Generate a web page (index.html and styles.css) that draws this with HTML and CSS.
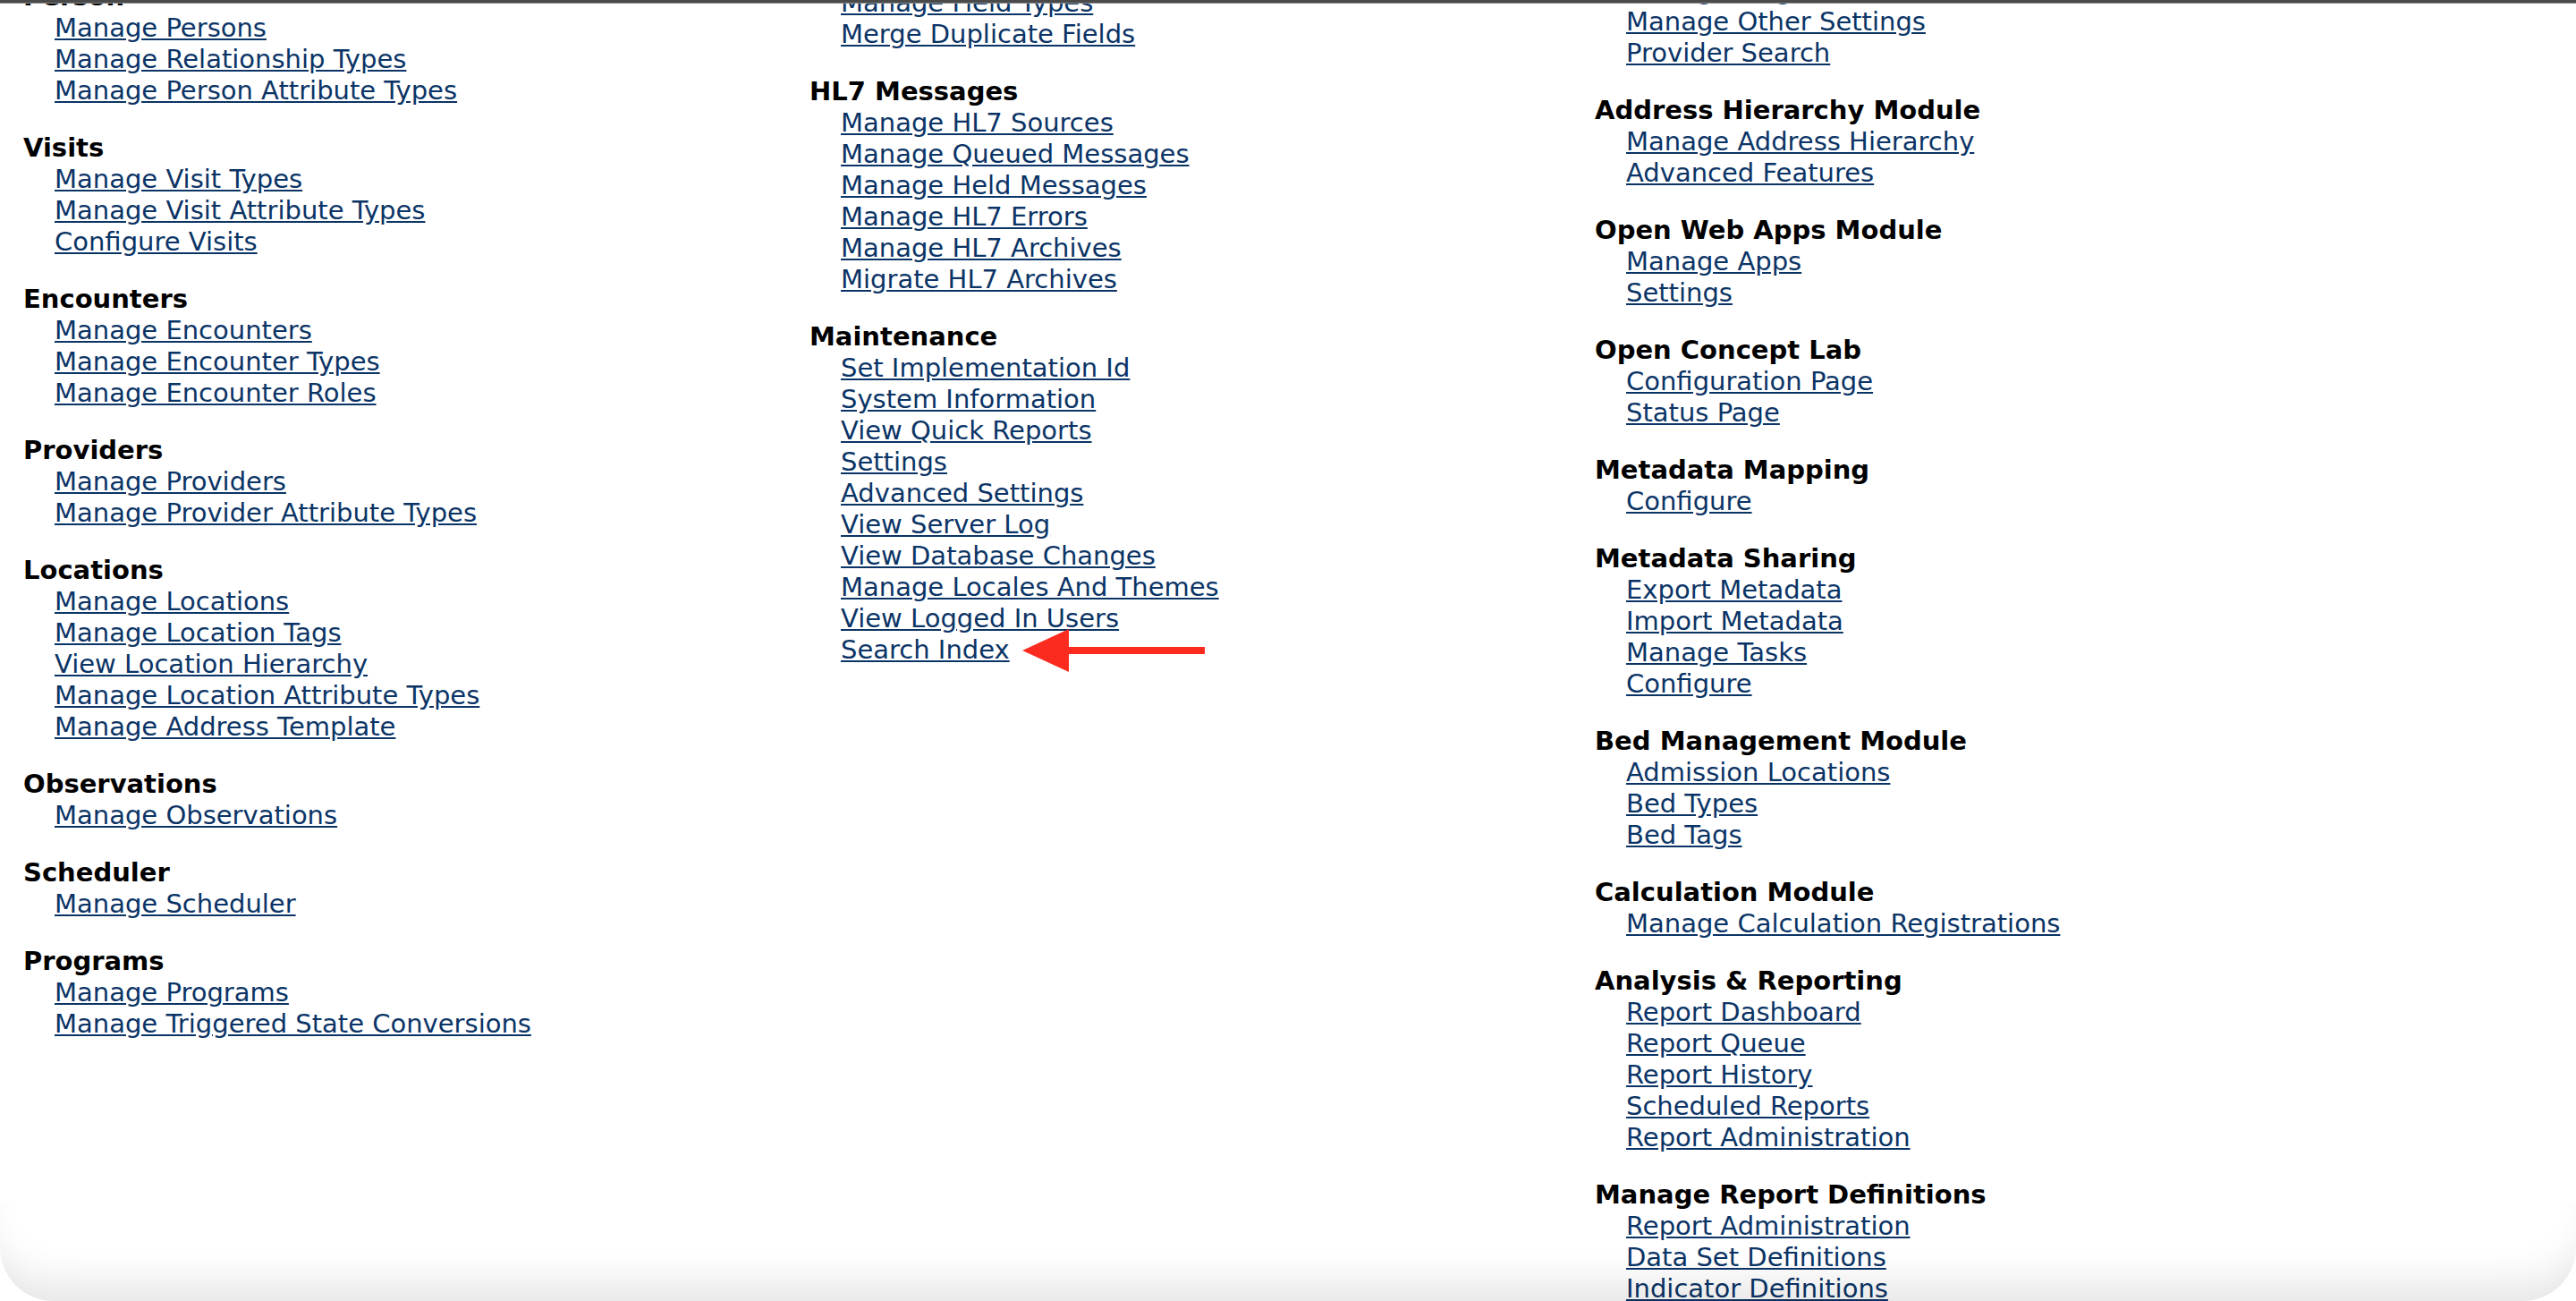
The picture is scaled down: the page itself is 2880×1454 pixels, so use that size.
FILE: index.html
```html
<!DOCTYPE html>
<html>
<head>
<meta charset="utf-8">
<title>Administration</title>
<link rel="stylesheet" href="styles.css">
</head>
<body>
<div class="topbar"></div>
<div class="page">
  <div class="col col-a">
    <div class="section">
      <h3 class="title">Person</h3>
      <ul class="links">
        <li><a href="#">Manage Persons</a></li>
        <li><a href="#">Manage Relationship Types</a></li>
        <li><a href="#">Manage Person Attribute Types</a></li>
      </ul>
    </div>
    <div class="section">
      <h3 class="title">Visits</h3>
      <ul class="links">
        <li><a href="#">Manage Visit Types</a></li>
        <li><a href="#">Manage Visit Attribute Types</a></li>
        <li><a href="#">Configure Visits</a></li>
      </ul>
    </div>
    <div class="section">
      <h3 class="title">Encounters</h3>
      <ul class="links">
        <li><a href="#">Manage Encounters</a></li>
        <li><a href="#">Manage Encounter Types</a></li>
        <li><a href="#">Manage Encounter Roles</a></li>
      </ul>
    </div>
    <div class="section">
      <h3 class="title">Providers</h3>
      <ul class="links">
        <li><a href="#">Manage Providers</a></li>
        <li><a href="#">Manage Provider Attribute Types</a></li>
      </ul>
    </div>
    <div class="section">
      <h3 class="title">Locations</h3>
      <ul class="links">
        <li><a href="#">Manage Locations</a></li>
        <li><a href="#">Manage Location Tags</a></li>
        <li><a href="#">View Location Hierarchy</a></li>
        <li><a href="#">Manage Location Attribute Types</a></li>
        <li><a href="#">Manage Address Template</a></li>
      </ul>
    </div>
    <div class="section">
      <h3 class="title">Observations</h3>
      <ul class="links">
        <li><a href="#">Manage Observations</a></li>
      </ul>
    </div>
    <div class="section">
      <h3 class="title">Scheduler</h3>
      <ul class="links">
        <li><a href="#">Manage Scheduler</a></li>
      </ul>
    </div>
    <div class="section">
      <h3 class="title">Programs</h3>
      <ul class="links">
        <li><a href="#">Manage Programs</a></li>
        <li><a href="#">Manage Triggered State Conversions</a></li>
      </ul>
    </div>
  </div>

  <div class="col col-b">
    <div class="section">
      <ul class="links">
        <li><a href="#">Manage Field Types</a></li>
        <li><a href="#">Merge Duplicate Fields</a></li>
      </ul>
    </div>
    <div class="section">
      <h3 class="title">HL7 Messages</h3>
      <ul class="links">
        <li><a href="#">Manage HL7 Sources</a></li>
        <li><a href="#">Manage Queued Messages</a></li>
        <li><a href="#">Manage Held Messages</a></li>
        <li><a href="#">Manage HL7 Errors</a></li>
        <li><a href="#">Manage HL7 Archives</a></li>
        <li><a href="#">Migrate HL7 Archives</a></li>
      </ul>
    </div>
    <div class="section">
      <h3 class="title">Maintenance</h3>
      <ul class="links">
        <li><a href="#">Set Implementation Id</a></li>
        <li><a href="#">System Information</a></li>
        <li><a href="#">View Quick Reports</a></li>
        <li><a href="#">Settings</a></li>
        <li><a href="#">Advanced Settings</a></li>
        <li><a href="#">View Server Log</a></li>
        <li><a href="#">View Database Changes</a></li>
        <li><a href="#">Manage Locales And Themes</a></li>
        <li><a href="#">View Logged In Users</a></li>
        <li class="marked"><a href="#">Search Index</a><span class="arrow"><span class="arrow-head"></span><span class="arrow-shaft"></span></span></li>
      </ul>
    </div>
  </div>

  <div class="col col-c">
    <div class="section">
      <ul class="links">
        <li><a href="#">Manage Flags</a></li>
        <li><a href="#">Manage Other Settings</a></li>
        <li><a href="#">Provider Search</a></li>
      </ul>
    </div>
    <div class="section">
      <h3 class="title">Address Hierarchy Module</h3>
      <ul class="links">
        <li><a href="#">Manage Address Hierarchy</a></li>
        <li><a href="#">Advanced Features</a></li>
      </ul>
    </div>
    <div class="section">
      <h3 class="title">Open Web Apps Module</h3>
      <ul class="links">
        <li><a href="#">Manage Apps</a></li>
        <li><a href="#">Settings</a></li>
      </ul>
    </div>
    <div class="section">
      <h3 class="title">Open Concept Lab</h3>
      <ul class="links">
        <li><a href="#">Configuration Page</a></li>
        <li><a href="#">Status Page</a></li>
      </ul>
    </div>
    <div class="section">
      <h3 class="title">Metadata Mapping</h3>
      <ul class="links">
        <li><a href="#">Configure</a></li>
      </ul>
    </div>
    <div class="section">
      <h3 class="title">Metadata Sharing</h3>
      <ul class="links">
        <li><a href="#">Export Metadata</a></li>
        <li><a href="#">Import Metadata</a></li>
        <li><a href="#">Manage Tasks</a></li>
        <li><a href="#">Configure</a></li>
      </ul>
    </div>
    <div class="section">
      <h3 class="title">Bed Management Module</h3>
      <ul class="links">
        <li><a href="#">Admission Locations</a></li>
        <li><a href="#">Bed Types</a></li>
        <li><a href="#">Bed Tags</a></li>
      </ul>
    </div>
    <div class="section">
      <h3 class="title">Calculation Module</h3>
      <ul class="links">
        <li><a href="#">Manage Calculation Registrations</a></li>
      </ul>
    </div>
    <div class="section">
      <h3 class="title">Analysis &amp; Reporting</h3>
      <ul class="links">
        <li><a href="#">Report Dashboard</a></li>
        <li><a href="#">Report Queue</a></li>
        <li><a href="#">Report History</a></li>
        <li><a href="#">Scheduled Reports</a></li>
        <li><a href="#">Report Administration</a></li>
      </ul>
    </div>
    <div class="section">
      <h3 class="title">Manage Report Definitions</h3>
      <ul class="links">
        <li><a href="#">Report Administration</a></li>
        <li><a href="#">Data Set Definitions</a></li>
        <li><a href="#">Indicator Definitions</a></li>
        <li><a href="#">Dimension Definitions</a></li>
      </ul>
    </div>
  </div>
</div>
<div class="bottom-shade"></div>
</body>
</html>
```

FILE: styles.css
```css
html, body {
  margin: 0;
  padding: 0;
  background: #ffffff;
  height: 100%;
  overflow: hidden;
}

body {
  font-family: "DejaVu Sans", Verdana, sans-serif;
  font-size: 29px;
  line-height: 35px;
  color: #000000;
  position: relative;
}

.topbar {
  position: absolute;
  top: 0;
  left: 0;
  right: 0;
  height: 3px;
  background: #4a4a4a;
  border-bottom: 1px solid #8a8a8a;
  z-index: 5;
}

.page {
  display: grid;
  grid-template-columns: 879px 878px 878px;
  align-items: start;
  padding-left: 26px;
}

.col-a { margin-top: -21px; }
.col-b { margin-top: -14px; }
.col-c { margin-top: -28px; }

.section {
  margin-bottom: 29px;
}

.title {
  margin: 0;
  font-size: 29px;
  line-height: 35px;
  font-weight: bold;
  color: #000000;
}

.links {
  list-style: none;
  margin: 0;
  padding: 0 0 0 35px;
}

.links li {
  line-height: 35px;
}

.links a {
  color: #0b3466;
  text-decoration: underline;
}

.marked {
  position: relative;
}

.arrow {
  position: absolute;
  top: 50%;
  left: 203px;
  display: flex;
  align-items: center;
  transform: translateY(-50%);
}

.arrow-head {
  width: 0;
  height: 0;
  border-top: 24px solid transparent;
  border-bottom: 24px solid transparent;
  border-right: 52px solid #fb2b1f;
}

.arrow-shaft {
  width: 152px;
  height: 8px;
  background: #fb2b1f;
}

.bottom-shade {
  position: absolute;
  left: 0;
  right: 0;
  bottom: 0;
  height: 110px;
  border-radius: 0 0 60px 60px;
  box-shadow: inset 0 -45px 45px -25px rgba(0, 0, 0, 0.1);
  pointer-events: none;
  z-index: 4;
}
```
